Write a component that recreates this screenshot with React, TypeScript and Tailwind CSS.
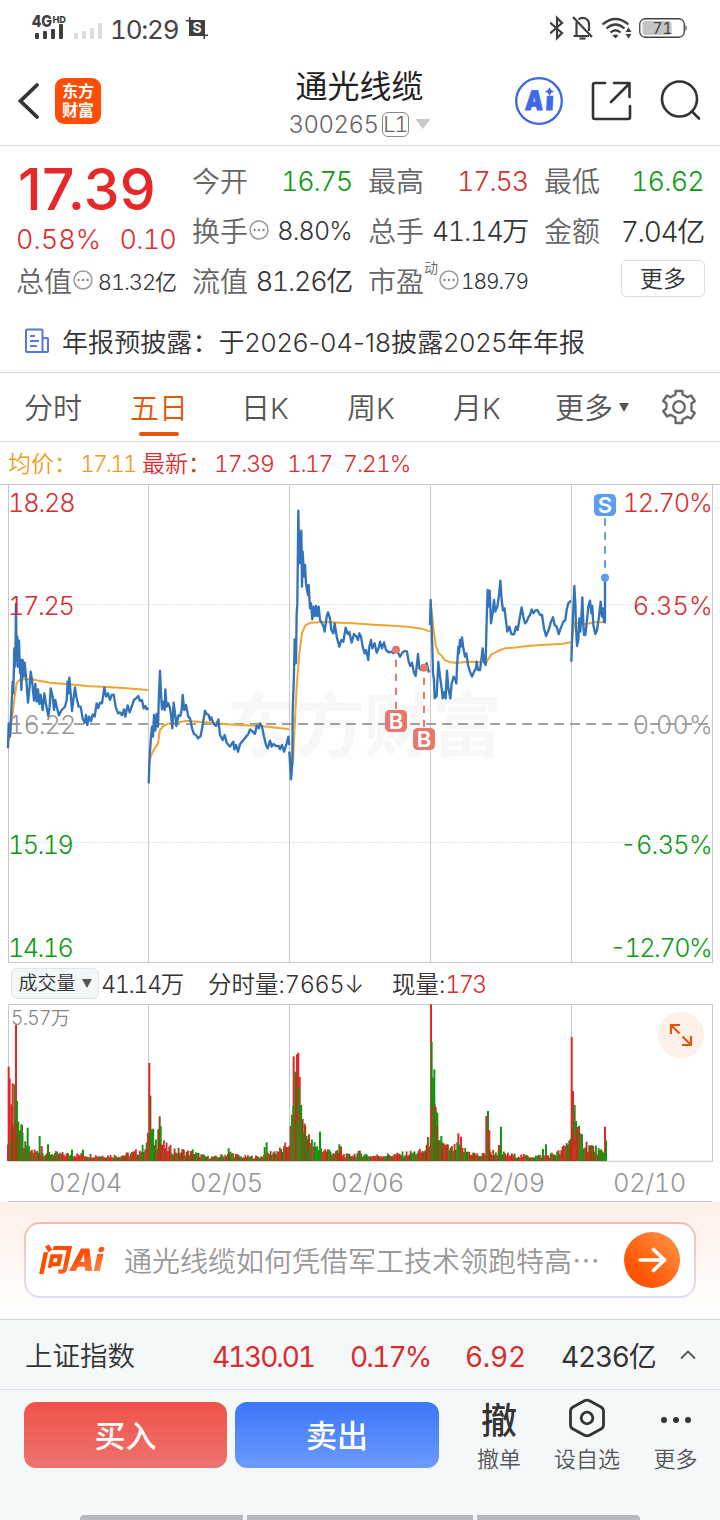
import type { ReactNode } from "react";

const DAYS = [
  {
    x: 0,
    y: 0,
    price:
      "24,805 26,730 30,770 34,690 38,605 40,640 43,505 46,560 48,372 50,540 52,470 54,560 57,482 60,580 62,540 64,630 68,540 71,590 74,548 79,600 84,668 88,630 92,575 96,600 102,662 106,612 110,665 114,628 118,672 122,645 128,690 133,640 138,672 145,708 149,680 152,625 158,650 162,690 166,660 170,680 177,706 185,690 195,680 200,660 203,605 206,640 208,593 212,640 216,693 220,660 225,622 229,650 236,680 242,680 248,716 254,728 258,705 262,735 267,710 273,724 278,703 284,710 290,670 295,684 300,668 306,670 313,622 318,650 324,640 330,660 335,645 341,644 347,680 354,700 360,697 366,706 372,688 376,710 383,676 389,697 395,680 402,660 408,655 415,648 420,663 426,660 431,685 436,678 440,688 445,684",
    avg: "24,790 32,750 38,700 44,650 50,610 58,600 70,598 90,597 110,601 150,608 200,612 260,618 320,621 380,625 445,630",
  },
  {
    x: 0,
    y: 0,
    price:
      "446,910 449,830 453,770 456,740 459,770 462,705 466,752 470,702 474,740 477,640 480,572 483,640 486,688 490,665 494,690 496,628 500,680 505,670 510,684 513,705 517,745 521,668 525,700 529,738 535,706 541,708 545,690 548,645 553,690 558,675 565,710 570,715 576,745 582,762 588,765 594,775 602,768 608,735 615,692 620,702 626,705 630,720 634,712 640,730 648,738 655,718 660,765 668,780 674,765 680,788 690,800 696,790 700,785 703,808 708,795 714,815 720,793 730,780 738,770 745,762 750,748 758,755 765,762 770,738 776,745 780,730 786,740 792,770 798,795 803,805 810,782 815,800 820,792 828,798 836,798 840,808 846,795 852,815 857,800 860,790 865,770 868,795",
    avg: "446,855 452,830 462,808 474,790 480,750 490,738 505,731 530,728 560,722 600,726 640,728 680,733 720,735 780,738 830,743 868,748",
  },
  {
    x: 840,
    y: 0,
    price:
      "28,815 33,898 37,850 38,700 42,580 44,478 48,550 50,400 52,372 55,92 58,250 61,180 64,152 66,320 68,215 72,290 75,255 78,310 81,330 84,345 86,315 90,385 93,370 97,418 101,380 105,408 108,378 112,408 116,380 120,420 126,430 131,440 134,455 140,410 144,397 150,415 154,450 160,460 164,430 170,470 178,500 184,480 190,485 197,443 203,462 208,456 215,488 222,462 228,468 234,480 238,460 243,470 248,500 254,520 258,510 265,540 268,500 273,480 277,505 284,490 290,518 296,505 300,485 306,505 312,487 318,510 326,517 334,515 340,520 348,508 355,520 360,530 368,517 375,513 381,515 386,545 391,558 396,548 402,578 407,588 414,522 418,565 424,570 432,562 440,550 446,575 448,572",
    avg: "28,815 36,860 40,830 44,740 50,620 58,520 66,460 76,436 92,428 130,426 180,428 220,430 280,434 340,437 390,441 425,446 451,455",
  },
  {
    x: 840,
    y: 0,
    price:
      "450,435 452,360 455,440 457,500 459,580 462,600 464,655 470,648 475,546 480,590 485,625 488,655 494,635 497,655 501,572 505,625 511,655 515,610 521,590 526,600 529,610 531,560 535,500 537,520 540,480 543,500 546,472 550,505 555,530 559,520 564,555 570,575 576,590 582,575 588,565 590,545 594,570 600,570 604,540 608,505 612,545 617,555 618,500 620,420 623,330 625,380 629,332 633,430 638,400 642,360 646,395 652,380 657,345 661,302 665,360 669,392 674,385 677,415 682,455 688,440 694,462 702,463 708,440 713,450 718,420 725,382 730,410 735,430 740,425 746,410 750,405 755,388 760,400 765,392 772,390 780,405 786,405 792,445 798,468 806,450 813,425 819,412 824,435 830,440 836,462 842,445 850,425 856,420 860,390 865,370 873,362",
    avg: "452,375 457,410 461,450 467,495 475,518 483,525 494,540 512,547 530,549 560,545 620,546 626,535 634,523 645,518 660,510 675,505 700,503 750,497 800,494 850,491 873,487",
  },
  {
    x: 1260,
    y: -330,
    price:
      "454,875 457,780 460,720 463,648 466,700 468,770 471,828 475,810 478,745 481,785 484,740 487,682 490,760 492,795 496,795 500,760 505,710 510,692 514,730 517,708 520,765 526,792 531,780 537,740 542,695 546,740 549,715 552,755 555,757 555,623",
    avg: "454,850 458,790 464,755 478,762 500,762 520,757 553,757",
  },
];

const DAY_LINES = [445.5, 868.5, 1291.5, 1714.5];

const PRICE_LABELS = [
  { y: 96, left: "18.28", lw: 203, right: "12.70%", rw: 270, color: "#d92e2e" },
  { y: 404, left: "17.25", lw: 201, right: "6.35%", rw: 240, color: "#d92e2e" },
  { y: 762, left: "16.22", lw: 205, right: "0.00%", rw: 240, color: "#999999" },
  { y: 1121, left: "15.19", lw: 198, right: "-6.35%", rw: 277, color: "#0c9a12" },
  { y: 1430, left: "14.16", lw: 198, right: "-12.70%", rw: 309, color: "#0c9a12" },
];

// [x, height] outline of the everyday volume
const ENVELOPE = [
  [22, 110], [40, 150], [60, 110], [75, 50], [90, 40], [110, 34], [140, 30], [180, 26], [220, 24],
  [300, 20], [360, 20], [400, 30], [425, 44], [440, 75], [450, 110], [465, 75], [485, 65], [500, 48],
  [530, 38], [580, 29], [620, 15], [650, 15], [690, 30], [720, 16], [780, 16], [800, 28], [850, 44],
  [865, 70], [873, 130], [881, 240], [900, 210], [912, 120], [925, 75], [950, 48], [1000, 34],
  [1040, 20], [1080, 30], [1110, 19], [1190, 24], [1270, 36], [1285, 75], [1290, 130], [1300, 190],
  [1310, 110], [1320, 65], [1350, 42], [1370, 52], [1400, 36], [1440, 20], [1470, 36], [1500, 30],
  [1530, 22], [1590, 18], [1640, 20], [1680, 34], [1700, 65], [1710, 100], [1725, 110], [1740, 84],
  [1760, 60], [1790, 42], [1812, 24],
];

const RED = "#e02828";
const GREEN = "#129612";
const BROWN = "#8a4a12";

const SPIKES: [number, number, string][] = [
  [26, 283, RED], [29, 248, RED], [34, 170, RED], [38, 233, RED], [44, 230, GREEN], [48, 408, RED],
  [51, 180, GREEN], [55, 118, GREEN], [66, 108, RED], [83, 100, GREEN], [119, 75, GREEN],
  [125, 45, RED], [144, 50, GREEN], [216, 34, GREEN], [249, 34, GREEN], [448, 294, RED],
  [451, 196, BROWN], [455, 95, RED], [475, 95, BROWN], [479, 134, BROWN], [482, 105, GREEN],
  [548, 36, BROWN], [578, 35, GREEN], [686, 38, GREEN], [800, 56, GREEN], [794, 42, GREEN],
  [881, 314, RED], [886, 268, GREEN], [891, 320, RED], [895, 325, RED], [899, 252, RED],
  [903, 168, GREEN], [907, 125, GREEN], [914, 112, RED], [927, 80, RED], [960, 88, GREEN],
  [1018, 50, GREEN], [1023, 44, RED], [1293, 470, RED], [1295, 357, GREEN], [1299, 250, GREEN],
  [1303, 275, GREEN], [1307, 162, RED], [1312, 145, GREEN], [1324, 75, GREEN], [1375, 83, RED],
  [1383, 73, RED], [1459, 135, RED], [1464, 150, GREEN], [1468, 92, RED], [1497, 48, RED],
  [1503, 103, GREEN], [1629, 36, GREEN], [1638, 50, GREEN], [1715, 372, RED], [1719, 210, RED],
  [1724, 168, GREEN], [1728, 120, GREEN], [1737, 105, GREEN], [1746, 80, RED], [1815, 103, RED],
  [1818, 62, GREEN],
];

function envelopeAt(x: number) {
  for (let i = 1; i < ENVELOPE.length; i++) {
    const [x0, h0] = ENVELOPE[i - 1];
    const [x1, h1] = ENVELOPE[i];
    if (x <= x1) return h0 + ((h1 - h0) * (x - x0)) / (x1 - x0);
  }
  return 20;
}

function noise(i: number) {
  const v = Math.sin(i * 12.9898) * 43758.5453;
  return v - Math.floor(v);
}

const BARS = Array.from({ length: 448 }, (_, i) => {
  const x = 22 + i * 4;
  const n = noise(i + 7);
  return {
    x,
    h: envelopeAt(x) * (0.45 + 0.65 * noise(i)),
    color: n < 0.38 ? RED : n < 0.72 ? GREEN : BROWN,
  };
});

function StatusBar() {
  return (
    <div className="flex h-14 items-center justify-between pl-8 pr-8 text-[#444]">
      <div className="flex items-center">
        <svg width="36" height="28" viewBox="0 0 36 28" className="overflow-visible" fill="#3f3f3f">
          <text x="0" y="13" fontSize="16" fontWeight="800" fontFamily="Inter" textLength="20" lengthAdjust="spacingAndGlyphs">4G</text>
          <text x="20.5" y="8.5" fontSize="9.5" fontWeight="800" fontFamily="Inter" textLength="13.5" lengthAdjust="spacingAndGlyphs">HD</text>
          <rect x="3" y="19" width="4" height="6" rx="1" />
          <rect x="11" y="17" width="4" height="8" rx="1" />
          <rect x="19" y="15" width="4" height="10" rx="1" />
          <rect x="27" y="10" width="4" height="15" rx="1" />
        </svg>
        <svg width="30" height="28" viewBox="0 0 30 28" className="ml-1.5" fill="#dcdcdc">
          <rect x="0" y="19" width="4" height="6" rx="1" />
          <rect x="8" y="17" width="4" height="8" rx="1" />
          <rect x="16" y="14" width="4" height="11" rx="1" />
          <rect x="24" y="9" width="4" height="16" rx="1" />
        </svg>
        <div className="ml-1.5 mt-1 w-[72px] text-[26px] leading-7 tracking-[-1.2px]">10:29</div>
        <svg width="22" height="22" viewBox="0 0 22 22" className="ml-1 overflow-visible">
          <path d="M3 3h16v16H3z" fill="#3f3f3f" />
          <path d="M0 3.700h4M3.700 0v3M18 18.300h4M18.300 18v4" stroke="#3f3f3f" strokeWidth="1.600" />
          <text x="11" y="16" fontSize="14" fontWeight="700" fontFamily="Inter" fill="#fff" textAnchor="middle">S</text>
        </svg>
      </div>
      <div className="flex items-center">
        <svg width="18" height="26" viewBox="0 0 18 26" className="-ml-1" fill="none" stroke="#3f3f3f" strokeWidth="2.200">
          <path d="M0 7.500l12 10.500-5 5V3l5 5L0 18.500" />
        </svg>
        <svg width="22" height="26" viewBox="0 0 22 26" className="ml-1" fill="none" stroke="#3f3f3f" strokeWidth="2.200">
          <path d="M4.500 7v13M6.500 4.500Q9 2 13 3.200 17 5 17 9v7M1.500 21h15.500M1 2l19 20" />
          <path d="M7.500 23.500h6" strokeWidth="2.200" />
        </svg>
        <svg width="32" height="26" viewBox="0 0 32 26" className="ml-[7px]" fill="none" stroke="#3f3f3f" strokeWidth="2.200">
          <path d="M1.500 9.500q13-11 26 0M5.500 13.500q9-8 18 0M9.500 17.500q5-4.500 10 0" />
          <path d="M11.500 20.500q3-2 6 0l-3 3z" fill="#3f3f3f" stroke="none" />
          <path d="M24.500 17l3-4.500 3 4.500zM24.500 19l3 4.500 3-4.500z" fill="#3f3f3f" stroke="none" />
        </svg>
        <svg width="49" height="20" viewBox="0 0 49 20" className="ml-1.5">
          <rect x="0.750" y="0.750" width="44.500" height="18.500" rx="5.500" fill="#fff" stroke="#3f3f3f" strokeWidth="1.300" />
          <rect x="3.500" y="3" width="29" height="14" rx="3" fill="#c4c4c4" />
          <path d="M46.500 6.500q2.500 3.500 0 7z" fill="#3f3f3f" />
          <text x="23.500" y="15.700" fontSize="15.500" fontFamily="Inter" fill="#444" textAnchor="middle">71</text>
        </svg>
      </div>
    </div>
  );
}

function Header() {
  return (
    <div className="flex h-[90px] items-center justify-between border-b border-[#d3d5d6] pl-[17px] pr-[18px]">
      <div className="flex w-[208px] items-center">
        <svg width="24" height="38" viewBox="0 0 24 38" fill="none" stroke="#333" strokeWidth="3.800" strokeLinecap="round">
          <path d="M20 3L3.500 19 20 35" strokeLinejoin="miter" />
        </svg>
        <div className="ml-3.5 flex size-[46px] flex-col items-center justify-center rounded-[9px] bg-[#ff4d05] pt-px text-[16px] font-bold leading-[19px] text-white">
          <div>东方</div>
          <div>财富</div>
        </div>
      </div>
      <div className="flex flex-col items-center pt-[5px]">
        <div className="text-[32px] leading-[42px] text-[#222]">通光线缆</div>
        <div className="flex h-8 items-center text-[24px] font-[350] text-[#666]">
          <div className="pt-0.5 tracking-[-0.5px]">300265</div>
          <div className="ml-[3px] flex h-[25px] w-[27px] items-center justify-center rounded-[6px] border border-[#888] text-[22px] tracking-[-1.5px]">
            L1
          </div>
          <svg width="16" height="10" viewBox="0 0 16 10" className="ml-1.5">
            <path d="M0.500 0h15L8 10z" fill="#c9c9c9" />
          </svg>
        </div>
      </div>
      <div className="flex w-[208px] items-center justify-end">
        <svg width="48" height="48" viewBox="0 0 48 48">
          <circle cx="24" cy="24" r="22.800" fill="none" stroke="#3f68e0" strokeWidth="2.300" />
          <g fill="#3d68e8" fontFamily="Inter" fontWeight="900" stroke="#3d68e8" strokeWidth="1">
            <text x="10" y="33" fontSize="27" textLength="18" lengthAdjust="spacingAndGlyphs" transform="translate(1.500 0) skewX(-3)">A</text>
            <text x="30.500" y="33" fontSize="25" textLength="8" lengthAdjust="spacingAndGlyphs" transform="translate(1.500 0) skewX(-3)">ı</text>
          </g>
          <path d="M34.500 10l1.600 2.900 2.900 1.600-2.900 1.600-1.600 2.900-1.600-2.900-2.900-1.600 2.900-1.600z" fill="#3d68e8" />
        </svg>
        <svg width="42" height="42" viewBox="0 0 42 42" className="ml-[27px]" fill="none" stroke="#333" strokeWidth="2.600" strokeLinecap="round" strokeLinejoin="round">
          <path d="M15 3H5Q3 3 3 5v32q0 2 2 2h33q2 0 2-2V26M24 3h15.500v14M39 4L21 22" />
        </svg>
        <svg width="42" height="42" viewBox="0 0 42 42" className="ml-[28px]" fill="none" stroke="#333" strokeWidth="2.600" strokeLinecap="round">
          <circle cx="19.500" cy="19" r="17.500" />
          <path d="M32 31.500l7 7" />
        </svg>
      </div>
    </div>
  );
}

function Dots() {
  return (
    <svg width="20" height="20" viewBox="0 0 20 20" className="mb-1 ml-px shrink-0">
      <circle cx="10" cy="10" r="9" fill="none" stroke="#999" strokeWidth="1.500" />
      <g fill="#888">
        <circle cx="5.500" cy="10" r="1.200" />
        <circle cx="10" cy="10" r="1.200" />
        <circle cx="14.500" cy="10" r="1.200" />
      </g>
    </svg>
  );
}

function Stat({ label, extra, children }: { label: string; extra?: ReactNode; children: ReactNode }) {
  return (
    <div className="flex h-[50px] items-center justify-between whitespace-nowrap">
      <div className="flex items-center">
        <div className="text-[28px] leading-8 text-[#666]">{label}</div>
        {extra}
      </div>
      {children}
    </div>
  );
}

function Quote() {
  return (
    <div className="grid h-[164px] grid-cols-[160px_160px_160px_160px] gap-x-4 px-4 pt-[11px] font-[350]">
      <div>
        <div className="h-[66px] pl-[2px] pt-[5px] text-[57px] font-medium proportional-nums leading-[56px] tracking-[0.3px] text-[#e62828]">
          17.39
        </div>
        <div className="flex h-[34px] items-center justify-between text-[27px] text-[#d92e2e]">
          <div>0.58%</div>
          <div className="tracking-[-0.8px]">0.10</div>
        </div>
        <Stat label="总值" extra={<Dots />}>
          <div className="text-[22px] tracking-[-1.1px] text-[#333]">81.32亿</div>
        </Stat>
      </div>
      <div>
        <Stat label="今开">
          <div className="text-[27px] tracking-[-1.2px] text-[#0c9a12]">16.75</div>
        </Stat>
        <Stat label="换手" extra={<Dots />}>
          <div className="text-[25px] tracking-[-0.8px] text-[#333]">8.80%</div>
        </Stat>
        <Stat label="流值">
          <div className="text-[27px] tracking-[-1.3px] text-[#333]">81.26亿</div>
        </Stat>
      </div>
      <div>
        <Stat label="最高">
          <div className="text-[27px] tracking-[-1.2px] text-[#d92e2e]">17.53</div>
        </Stat>
        <Stat label="总手">
          <div className="text-[27px] tracking-[-1.3px] text-[#333]">41.14万</div>
        </Stat>
        <Stat
          label="市盈"
          extra={
            <>
              <div className="mb-7 text-[14px] leading-4 text-[#666]">动</div>
              <Dots />
            </>
          }
        >
          <div className="text-[21px] tracking-[-1.1px] text-[#333]">189.79</div>
        </Stat>
      </div>
      <div>
        <Stat label="最低">
          <div className="text-[27px] tracking-[-0.8px] text-[#0c9a12]">16.62</div>
        </Stat>
        <Stat label="金额">
          <div className="text-[28px] tracking-[-1.3px] text-[#333]">7.04亿</div>
        </Stat>
        <div className="ml-[77px] mt-[3px] flex h-[37px] w-[84px] items-center justify-center rounded-[5px] border border-[#dcdedf] pt-0.5 text-[23px] text-[#333]">
          更多
        </div>
      </div>
    </div>
  );
}

function Notice() {
  return (
    <div className="flex h-[63px] items-center border-b border-[#d3d5d6] pl-6 text-[26px] text-[#333]">
      <svg width="26" height="26" viewBox="0 0 26 26" fill="none" stroke="#5478dc" strokeWidth="2" strokeLinejoin="round">
        <path d="M18.500 24H3Q2 24 2 23V2.500Q2 1.500 3 1.500h14.500q1 0 1 1zM18.500 10h4.500q1 0 1 1v12q0 1-1 1h-4.500M6 8h5M6 13h9M6 18h7" />
      </svg>
      <div className="ml-3 whitespace-nowrap pt-0.5 font-[350] proportional-nums tracking-[0.080px]">
        年报预披露：于2026-04-18披露2025年年报
      </div>
    </div>
  );
}

function Tabs() {
  return (
    <div className="flex h-[69px] items-center border-b border-[#d3d5d6] text-[29px] font-[350] text-[#555]">
      {["分时", "五日", "日K", "周K", "月K"].map((tab) => (
        <div
          key={tab}
          className={
            tab === "五日"
              ? "relative flex h-full w-[106px] items-center justify-center pt-[3px] text-[#e0570e]"
              : "flex w-[106px] items-center justify-center pt-[3px]"
          }
        >
          {tab}
          {tab === "五日" && <div className="absolute bottom-[5px] left-[33px] h-1 w-10 rounded-sm bg-[#e0570e]" />}
        </div>
      ))}
      <div className="flex w-[126px] items-center justify-center pr-0.5">
        <div className="pt-[3px]">更多</div>
        <svg width="10" height="9" viewBox="0 0 10 9" className="ml-1.5">
          <path d="M0 0h10L5 9z" fill="#555" />
        </svg>
      </div>
      <svg width="36" height="36" viewBox="0 0 36 36" className="ml-[5px]" fill="none" stroke="#666" strokeWidth="2.300" strokeLinejoin="round">
        <path d="M14.500 2h7v3.500l5 2.800 3.500-1.800 3.800 5.500-3.300 2.500v7l3.300 2.500-3.800 5.500-3.500-1.800-5 2.800V34h-7v-5.500l-5-2.800L6 27.500 2.200 22l3.300-2.500v-5L2.200 12 6 6.500l3.500 1.800 5-2.800z" />
        <circle cx="18" cy="18" r="5.800" />
      </svg>
    </div>
  );
}

function AverageRow() {
  return (
    <div className="flex h-[42px] items-center whitespace-nowrap pl-2 pt-0.5 text-[23px] font-[350]">
      <div className="w-[72px] text-[#ef9d1c]">均价：</div>
      <div className="w-[62px] tracking-[-2px] text-[#ef9d1c]">17.11</div>
      <div className="w-[72px] text-[#d92e2e]">最新：</div>
      <div className="w-[73px] tracking-[-1.2px] text-[#d92e2e]">17.39</div>
      <div className="w-[56px] tracking-[-1.5px] text-[#d92e2e]">1.17</div>
      <div className="tracking-[-1px] text-[#d92e2e]">7.21%</div>
    </div>
  );
}

function TradeMark({ x, y, dotY, letter, color }: { x: number; y: number; dotY: number; letter: string; color: string }) {
  return (
    <g>
      <line x1={x} x2={x} y1={dotY} y2={y} stroke={color} strokeWidth="6" strokeDasharray="22 20" strokeDashoffset="-30" />
      <circle cx={x} cy={dotY} r="12" fill={color} />
      <rect x={x - 33} y={y - 33} width="66" height="66" rx="14" fill={color} />
      <text x={x} y={y + 24} fontSize="66" fontWeight="600" fill="#fff" textAnchor="middle">{letter}</text>
    </g>
  );
}

function PriceChart() {
  return (
    <svg width="720" height="479" viewBox="0 12 2160 1437" className="block font-['Inter','Noto_Sans_CJK_SC',sans-serif]">
      <text x="680" y="812" fontSize="208" fontWeight="700" fill="#f7f7f7" textLength="825">东方财富</text>
      <g stroke="#c6c8ca" strokeWidth="3" fill="none">
        <path d="M0 13.500H2160M24 1447.500H2139" />
        <path d="M25.500 12V1449M2137.500 12V1449" />
        {DAY_LINES.map((x) => (
          <line key={x} x1={x} x2={x} y1="16" y2="1449" />
        ))}
        <path d="M25 373.500H2137M25 1087.500H2137" strokeDasharray="3 6" />
      </g>
      <path d="M30 732H2137" stroke="#858585" strokeWidth="5" strokeDasharray="30 18" />
      {DAYS.map((d) => (
        <g key={d.price} transform={`translate(${d.x} ${d.y})`} fill="none" strokeLinejoin="round">
          <polyline points={d.avg} stroke="#efa532" strokeWidth="6" />
          <polyline points={d.price} stroke="#3373b9" strokeWidth="7" />
        </g>
      ))}
      {PRICE_LABELS.map((l) => (
        <g key={l.y} fontSize="76" fontWeight="350" fill={l.color}>
          <text x="24" y={l.y} textLength={l.lw}>{l.left}</text>
          <text x={2138 - l.rw} y={l.y} textLength={l.rw}>{l.right}</text>
        </g>
      ))}
      <TradeMark x={1188} y={723} dotY={509} letter="B" color="#e8776c" />
      <TradeMark x={1272} y={777} dotY={563} letter="B" color="#e8776c" />
      <TradeMark x={1815} y={75} dotY={293} letter="S" color="#5b9df2" />
    </svg>
  );
}

function VolumeHeader() {
  return (
    <div className="flex h-[41px] items-center whitespace-nowrap pl-[11px] text-[23.500px] font-[350] text-[#333]">
      <div className="flex h-[31px] w-[88px] items-center justify-center rounded-[6px] border border-[#e1e5e7] bg-[#f4f7f8] text-[19px]">
        <div className="pt-px">成交量</div>
        <svg width="10" height="9" viewBox="0 0 10 9" className="ml-1.5">
          <path d="M0 0h10L5 9z" fill="#555" />
        </svg>
      </div>
      <div className="ml-[2px] w-[107px] pt-0.5 tracking-[-1.5px]">41.14万</div>
      <div className="w-[184px] pt-0.5">
        分时量:<span className="tracking-[-0.3px]">7665</span>↓
      </div>
      <div className="pt-0.5">
        现量:<span className="tracking-[-1.8px] text-[#d92e2e]">173</span>
      </div>
    </div>
  );
}

function VolumeChart() {
  return (
    <div className="relative">
      <svg width="720" height="158" viewBox="0 162 2160 474" className="block font-['Inter','Noto_Sans_CJK_SC',sans-serif]">
        <g stroke="#c6c8ca" strokeWidth="3" fill="none">
          <path d="M25.500 163.500H2137.500V634H25.500z" />
          {DAY_LINES.map((x) => (
            <line key={x} x1={x} x2={x} y1="163" y2="634" />
          ))}
        </g>
        <text x="33" y="224" fontSize="58" fontWeight="350" fill="#888" textLength="177">5.57万</text>
        {SPIKES.map(([x, h, color]) => (
          <rect key={x} x={x - 3} y={633 - h} width="6" height={h} fill={color} />
        ))}
        {BARS.map((b) => (
          <rect key={b.x} x={b.x - 1} y={633 - b.h} width="5.500" height={b.h} fill={b.color} />
        ))}
      </svg>
      <div className="absolute right-4 top-2 flex size-[46px] items-center justify-center rounded-full bg-[#fdf0e8]">
        <svg width="24" height="24" viewBox="0 0 24 24" fill="none" stroke="#e0570e" strokeWidth="2.200">
          <path d="M2 11V2h9M2.500 2.500l8 8M22 13v9h-9M21.500 21.500l-8-8" />
        </svg>
      </div>
    </div>
  );
}

function Dates() {
  return (
    <div className="flex h-[40px] pl-[15px]">
      {["02/04", "02/05", "02/06", "02/09", "02/10"].map((d) => (
        <div key={d} className="flex w-[141px] items-center justify-center pt-0.5 text-[25.500px] font-[350] tracking-[-0.4px] text-[#959595]">
          {d}
        </div>
      ))}
    </div>
  );
}

function AskBar() {
  return (
    <div className="h-[118px] border-b border-[#d3d5d6] bg-linear-to-b from-[#fff0e9] to-white px-6 pt-5">
      <div className="h-[76px] rounded-2xl bg-linear-to-b from-[#fab9ac] to-[#d9e2f5] p-[2px]">
        <div className="flex h-full items-center rounded-[14px] bg-white pl-[14px] pr-[14px]">
          <div className="w-[68px] -skew-x-12 whitespace-nowrap bg-linear-to-br from-[#ff4d00] from-50% to-[#ff9a55] bg-clip-text text-[31px] font-black leading-9 tracking-[-0.5px] text-transparent">
            问Ai
          </div>
          <div className="ml-4 flex-1 whitespace-nowrap pt-[3px] text-[28px] font-[350] text-[#999]">通光线缆如何凭借军工技术领跑特高⋯</div>
          <svg width="56" height="56" viewBox="0 0 56 56" className="shrink-0">
            <defs>
              <linearGradient id="go" x1="0.200" y1="0.700" x2="0.900" y2="0">
                <stop offset="0" stopColor="#ff5502" />
                <stop offset="1" stopColor="#ff9244" />
              </linearGradient>
            </defs>
            <circle cx="28" cy="28" r="28" fill="url(#go)" />
            <path d="M16 28h24M29.500 17.500L40.500 28 29.500 38.500" fill="none" stroke="#fff" strokeWidth="3.600" strokeLinecap="round" strokeLinejoin="round" />
          </svg>
        </div>
      </div>
    </div>
  );
}

function IndexRow() {
  return (
    <div className="flex h-[70px] items-center whitespace-nowrap border-b border-[#dde0e2] bg-[#f5f8f9] pl-[25px] text-[28px] text-[#333]">
      <div className="w-[187px] pt-1 text-[27.500px] font-[350]">上证指数</div>
      <div className="w-[138px] pt-1 tracking-[-2.1px] text-[#d92e2e]">4130.01</div>
      <div className="w-[115px] pt-1 tracking-[-1.8px] text-[#d92e2e]">0.17%</div>
      <div className="w-[96px] pt-1 tracking-[-0.3px] text-[#d92e2e]">6.92</div>
      <div className="w-[119px] pt-1 tracking-[-1.2px]">4236亿</div>
      <svg width="16" height="10" viewBox="0 0 16 10" fill="none" stroke="#555" strokeWidth="1.800">
        <path d="M1 8.500L8 1.500l7 7" />
      </svg>
    </div>
  );
}

function BottomBar() {
  return (
    <div className="flex h-[130px] flex-col justify-between bg-[#f5f8f9]">
      <div className="flex pl-6 pt-3">
        <button className="h-[66px] w-[203px] rounded-xl bg-linear-to-b from-[#ef5149] to-[#ec736d] pt-[3px] text-[31px] font-medium text-white">买入</button>
        <button className="ml-2 h-[66px] w-[204px] rounded-xl bg-linear-to-b from-[#3b76f6] to-[#6c9afd] pt-[3px] text-[31px] font-medium text-white">卖出</button>
        <div className="ml-[16px] flex w-[88px] flex-col items-center">
          <div className="h-[37px] text-[36px] font-medium leading-[39px] text-[#333]">撤</div>
          <div className="mt-1 text-[22px] font-[350] leading-8 text-[#555]">撤单</div>
        </div>
        <div className="flex w-[88px] flex-col items-center">
          <svg width="38" height="40" viewBox="0 0 38 40" className="-mt-1 mb-px" fill="none" stroke="#333" strokeWidth="2.800" strokeLinejoin="round">
            <path d="M16.500 2.700q2.500-1.300 5 0l11.500 6.300q2.500 1.500 2.500 4v14q0 2.500-2.500 4l-11.500 6.300q-2.500 1.300-5 0L5 31q-2.500-1.500-2.500-4V13q0-2.500 2.500-4z" />
            <circle cx="19" cy="20" r="5.800" />
          </svg>
          <div className="mt-1 text-[22px] font-[350] leading-8 text-[#555]">设自选</div>
        </div>
        <div className="flex w-[89px] flex-col items-center">
          <svg width="36" height="37" viewBox="0 0 36 37" fill="#333">
            <circle cx="6" cy="18" r="3" />
            <circle cx="18" cy="18" r="3" />
            <circle cx="30" cy="18" r="3" />
          </svg>
          <div className="mt-1 text-[22px] font-[350] leading-8 text-[#555]">更多</div>
        </div>
      </div>
      <div className="flex justify-center gap-1">
        <div className="h-[5px] w-[163px] rounded-tl bg-[#b6babc]" />
        <div className="h-[5px] w-[226px] bg-[#b6babc]" />
        <div className="h-[5px] w-[163px] rounded-tr bg-[#b6babc]" />
      </div>
    </div>
  );
}

export default function App() {
  return (
    <div className="h-[1520px] w-[720px] overflow-hidden bg-white font-['Inter','Noto_Sans_CJK_SC',sans-serif] tabular-nums">
      <StatusBar />
      <Header />
      <Quote />
      <Notice />
      <Tabs />
      <AverageRow />
      <PriceChart />
      <VolumeHeader />
      <VolumeChart />
      <Dates />
      <div className="mx-2 -mt-px h-px bg-[#c6c8ca]" />
      <AskBar />
      <IndexRow />
      <BottomBar />
    </div>
  );
}
